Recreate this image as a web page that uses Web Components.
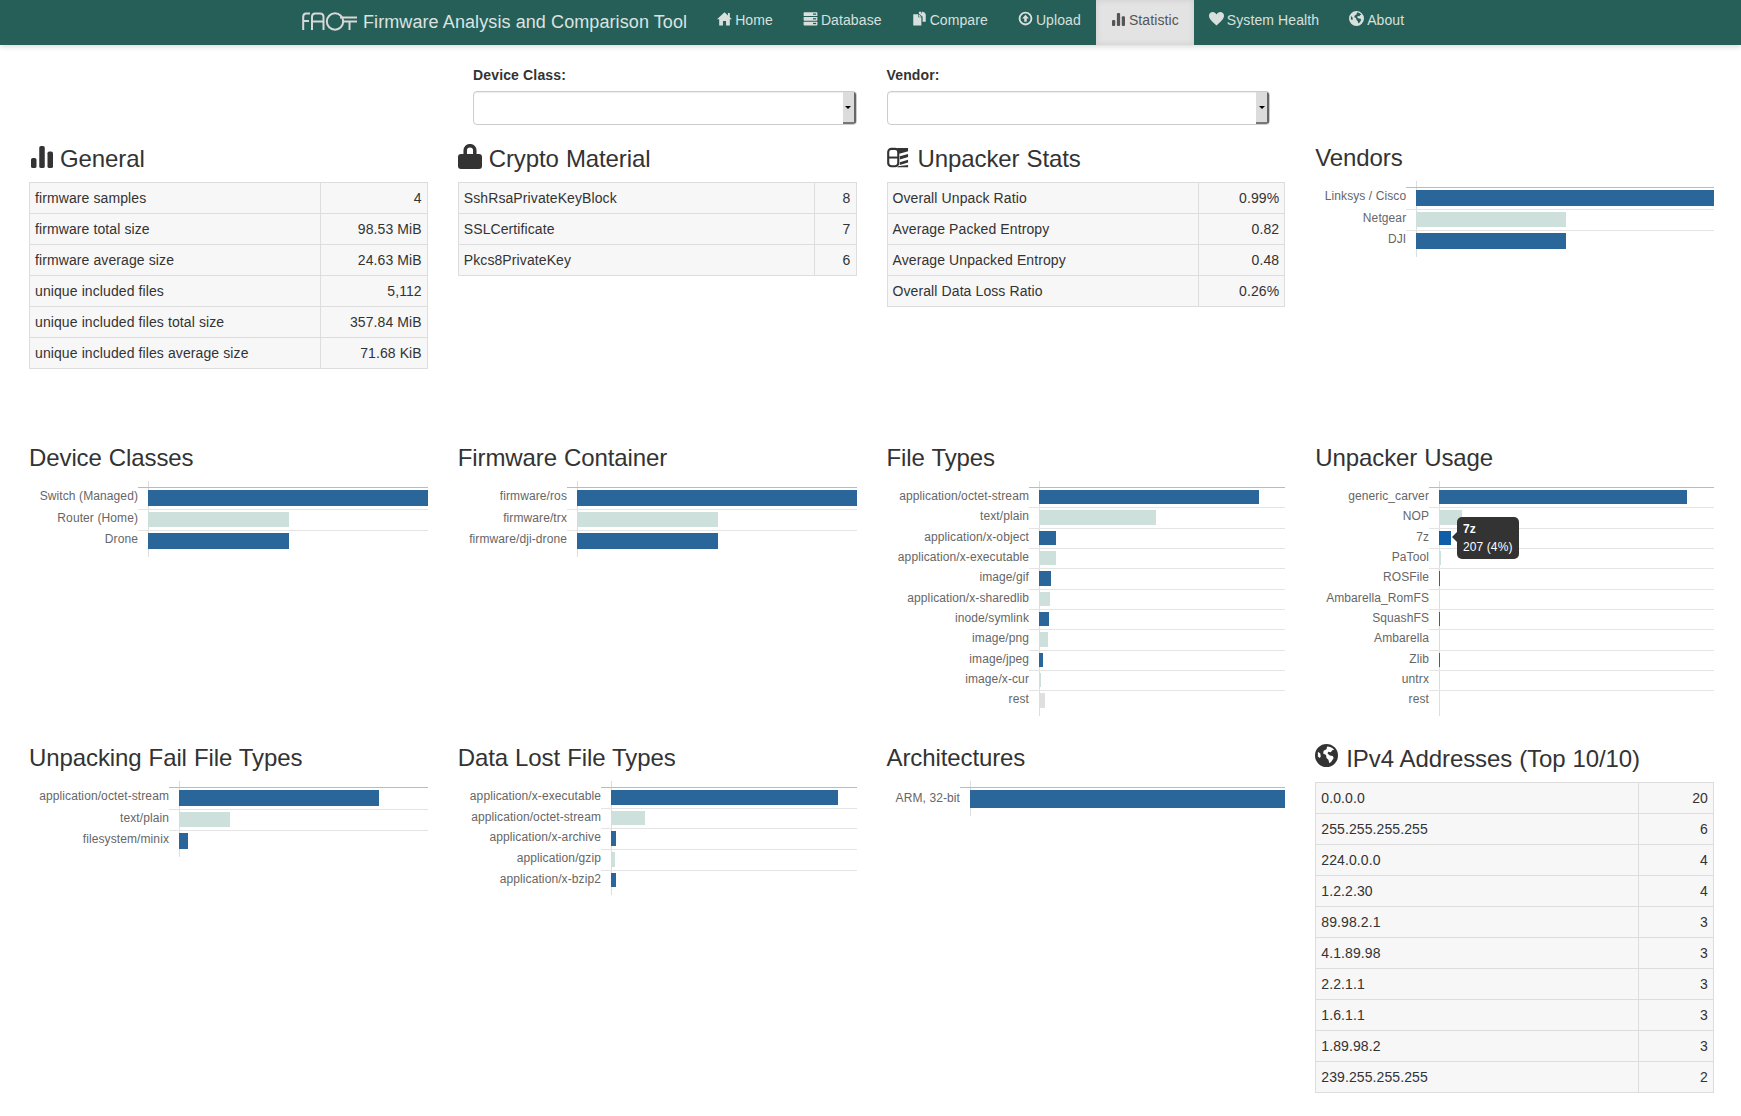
<!DOCTYPE html>
<html>
<head>
<meta charset="utf-8">
<title>FACT Statistic</title>
<style>
  html, body { margin: 0; background: #fff; font-family: "Liberation Sans", Arial, sans-serif; color: #333; font-size: 14px; }
</style>
</head>
<body>
<fact-navbar>
  <nav-link icon="home">Home</nav-link>
  <nav-link icon="database">Database</nav-link>
  <nav-link icon="compare">Compare</nav-link>
  <nav-link icon="upload">Upload</nav-link>
  <nav-link icon="stats" active>Statistic</nav-link>
  <nav-link icon="heart">System Health</nav-link>
  <nav-link icon="globe">About</nav-link>
</fact-navbar>

<filter-bar>
  <filter-select label="Device Class:"></filter-select>
  <filter-select label="Vendor:"></filter-select>
</filter-bar>

<stats-grid>
  <stats-panel heading="General" icon="stats">
    <stat-table style="--split:291px">
      <stat-row><span>firmware samples</span><span slot="value">4</span></stat-row>
      <stat-row><span>firmware total size</span><span slot="value">98.53 MiB</span></stat-row>
      <stat-row><span>firmware average size</span><span slot="value">24.63 MiB</span></stat-row>
      <stat-row><span>unique included files</span><span slot="value">5,112</span></stat-row>
      <stat-row><span>unique included files total size</span><span slot="value">357.84 MiB</span></stat-row>
      <stat-row><span>unique included files average size</span><span slot="value">71.68 KiB</span></stat-row>
    </stat-table>
  </stats-panel>
  <stats-panel heading="Crypto Material" icon="lock">
    <stat-table style="--split:356px">
      <stat-row><span>SshRsaPrivateKeyBlock</span><span slot="value">8</span></stat-row>
      <stat-row><span>SSLCertificate</span><span slot="value">7</span></stat-row>
      <stat-row><span>Pkcs8PrivateKey</span><span slot="value">6</span></stat-row>
    </stat-table>
  </stats-panel>
  <stats-panel heading="Unpacker Stats" icon="unpack">
    <stat-table style="--split:311px">
      <stat-row><span>Overall Unpack Ratio</span><span slot="value">0.99%</span></stat-row>
      <stat-row><span>Average Packed Entropy</span><span slot="value">0.82</span></stat-row>
      <stat-row><span>Average Unpacked Entropy</span><span slot="value">0.48</span></stat-row>
      <stat-row><span>Overall Data Loss Ratio</span><span slot="value">0.26%</span></stat-row>
    </stat-table>
  </stats-panel>
  <stats-panel heading="Vendors">
    <bar-chart style="--axis:101px;--row:21.5px;--label-h:19px">
      <bar-row value="100">Linksys / Cisco</bar-row>
      <bar-row value="50.2" tone="alt">Netgear</bar-row>
      <bar-row value="50.2">DJI</bar-row>
    </bar-chart>
  </stats-panel>

  <stats-panel heading="Device Classes">
    <bar-chart style="--axis:119px;--row:21.5px;--label-h:19px">
      <bar-row value="100">Switch (Managed)</bar-row>
      <bar-row value="50.4" tone="alt">Router (Home)</bar-row>
      <bar-row value="50.4">Drone</bar-row>
    </bar-chart>
  </stats-panel>
  <stats-panel heading="Firmware Container">
    <bar-chart style="--axis:119.25px;--row:21.5px;--label-h:19px">
      <bar-row value="100">firmware/ros</bar-row>
      <bar-row value="50.4" tone="alt">firmware/trx</bar-row>
      <bar-row value="50.4">firmware/dji-drone</bar-row>
    </bar-chart>
  </stats-panel>
  <stats-panel heading="File Types">
    <bar-chart style="--axis:152.5px;--row:20.33px">
      <bar-row value="89.5">application/octet-stream</bar-row>
      <bar-row value="47.5" tone="alt">text/plain</bar-row>
      <bar-row value="7.1">application/x-object</bar-row>
      <bar-row value="7" tone="alt">application/x-executable</bar-row>
      <bar-row value="4.9">image/gif</bar-row>
      <bar-row value="4.5" tone="alt">application/x-sharedlib</bar-row>
      <bar-row value="4.1">inode/symlink</bar-row>
      <bar-row value="3.7" tone="alt">image/png</bar-row>
      <bar-row value="1.6">image/jpeg</bar-row>
      <bar-row value="1" tone="alt">image/x-cur</bar-row>
      <bar-row value="2.4" tone="rest">rest</bar-row>
    </bar-chart>
  </stats-panel>
  <stats-panel heading="Unpacker Usage">
    <bar-chart style="--axis:123.75px;--row:20.33px">
      <bar-row value="90.2">generic_carver</bar-row>
      <bar-row value="8.4" tone="alt">NOP</bar-row>
      <bar-row value="4.4" tone="hover">7z</bar-row>
      <bar-row value="0.8" tone="alt">PaTool</bar-row>
      <bar-row value="0.4">ROSFile</bar-row>
      <bar-row value="0.2" tone="alt">Ambarella_RomFS</bar-row>
      <bar-row value="0.4">SquashFS</bar-row>
      <bar-row value="0.2" tone="alt">Ambarella</bar-row>
      <bar-row value="0.4">Zlib</bar-row>
      <bar-row value="0.2" tone="alt">untrx</bar-row>
      <bar-row value="0.3" tone="rest">rest</bar-row>
      <chart-tip slot="tip" style="left:141.75px;top:36px"><b>7z</b><span>207 (4%)</span></chart-tip>
    </bar-chart>
  </stats-panel>

  <stats-panel heading="Unpacking Fail File Types">
    <bar-chart style="--axis:150px;--row:21.5px;--label-h:19px">
      <bar-row value="80.3">application/octet-stream</bar-row>
      <bar-row value="20.5" tone="alt">text/plain</bar-row>
      <bar-row value="3.6">filesystem/minix</bar-row>
    </bar-chart>
  </stats-panel>
  <stats-panel heading="Data Lost File Types">
    <bar-chart style="--axis:153.25px;--row:20.7px">
      <bar-row value="92.3">application/x-executable</bar-row>
      <bar-row value="13.8" tone="alt">application/octet-stream</bar-row>
      <bar-row value="2">application/x-archive</bar-row>
      <bar-row value="1.6" tone="alt">application/gzip</bar-row>
      <bar-row value="2">application/x-bzip2</bar-row>
    </bar-chart>
  </stats-panel>
  <stats-panel heading="Architectures">
    <bar-chart style="--axis:83.5px;--row:24.3px">
      <bar-row value="100">ARM, 32-bit</bar-row>
    </bar-chart>
  </stats-panel>
  <stats-panel heading="IPv4 Addresses (Top 10/10)" icon="globe">
    <stat-table style="--split:323px">
      <stat-row><span>0.0.0.0</span><span slot="value">20</span></stat-row>
      <stat-row><span>255.255.255.255</span><span slot="value">6</span></stat-row>
      <stat-row><span>224.0.0.0</span><span slot="value">4</span></stat-row>
      <stat-row><span>1.2.2.30</span><span slot="value">4</span></stat-row>
      <stat-row><span>89.98.2.1</span><span slot="value">3</span></stat-row>
      <stat-row><span>4.1.89.98</span><span slot="value">3</span></stat-row>
      <stat-row><span>2.2.1.1</span><span slot="value">3</span></stat-row>
      <stat-row><span>1.6.1.1</span><span slot="value">3</span></stat-row>
      <stat-row><span>1.89.98.2</span><span slot="value">3</span></stat-row>
      <stat-row><span>239.255.255.255</span><span slot="value">2</span></stat-row>
    </stat-table>
  </stats-panel>
</stats-grid>

<script>
const ICONS = {
  home: '<path d="M12 2 0 13h3.5v10h6v-7h5v7h6V13H24L20.5 9.8V3h-3v4L12 2z"/>',
  database: '<rect x="1" y="2" width="22" height="6" rx="1"/><rect x="1" y="9.5" width="22" height="6" rx="1"/><rect x="1" y="17" width="22" height="6" rx="1"/><g fill="var(--icon-cut,#265f58)"><rect x="16" y="4" width="5" height="2"/><rect x="16" y="11.5" width="5" height="2"/><rect x="16" y="19" width="5" height="2"/></g>',
  compare: '<path d="M2 5h8v5h5v13H2z"/><path d="M11 5l4 4h-4z"/><path d="M11 1h4v3h1V1h1l5 4v12h-5V9l-6-5z"/><path d="M18 1l4 3h-4z"/>',
  upload: '<path fill-rule="evenodd" d="M12 1a11 11 0 1 0 0 22 11 11 0 0 0 0-22zm0 3a8 8 0 1 1 0 16 8 8 0 0 1 0-16z"/><path d="M12 6l5.5 6H14v5h-4v-5H6.500z"/>',
  stats: '<rect x="0" y="13" width="6" height="11" rx="2"/><rect x="9" y="0" width="6" height="24" rx="2"/><rect x="18" y="6" width="6" height="18" rx="2"/>',
  heart: '<path d="M12 23C5 17 0 12.500 0 7.500 0 3.500 3 1.500 6 1.500c2.500 0 4.800 1.400 6 4 1.200-2.600 3.500-4 6-4 3 0 6 2 6 6 0 5-5 9.500-12 15.500z"/>',
  globe: '<path fill-rule="evenodd" d="M12 0a12 12 0 1 0 0 24 12 12 0 0 0 0-24zM13 2.500c2 0 5 1 7 3.500l-2 .5-1.500 2-2.500-.5-1 2 2.500 2 3 .5 1 2-2.500 4-2 1.500-1-3.500-2-2-.5-3-3-1.500.5-3 3-1.500.5-2.500zM3 8l2.500 2 .5 3-1 1.500L3 13z"/>',
  lock: '<path d="M7.200 11V6.500a4.800 4.800 0 0 1 9.600 0V11" fill="none" stroke="currentColor" stroke-width="3.500"/><rect x="0" y="10" width="24" height="15" rx="3"/>',
  unpack: '<rect x="1.300" y="2" width="11" height="19" rx="3.500" fill="none" stroke="currentColor" stroke-width="2.300"/><path d="M2 11.500h10" stroke="currentColor" stroke-width="2.200" fill="none"/><path d="M11 1h12v3.500l-8.500 2.500H12z"/><path d="M14 10l9-2.500v3.500l-9 2.500z"/><path d="M14 16.500l9-2.500v3l-9 2.500z"/><path d="M12 21l11-1.500V22H11z"/>'
};

class UiIcon extends HTMLElement {
  constructor() {
    super();
    this.attachShadow({ mode: 'open' });
  }
  connectedCallback() {
    const vb = this.getAttribute('name') === 'lock' ? '0 0 24 25' : '0 0 24 24';
    this.shadowRoot.innerHTML = `
      <style>
        :host { display: inline-block; line-height: 0; }
        svg { width: 100%; height: 100%; fill: currentColor; display: block; }
      </style>
      <svg viewBox="${vb}">${ICONS[this.getAttribute('name')] || ''}</svg>`;
  }
}
customElements.define('ui-icon', UiIcon);

class FactNavbar extends HTMLElement {
  constructor() {
    super();
    this.attachShadow({ mode: 'open' }).innerHTML = `
      <style>
        :host {
          display: flex;
          height: 45px;
          padding-left: 302px;
          background: #265f58;
          box-shadow: 0 2px 5px rgba(0, 0, 0, 0.14);
          position: relative;
          z-index: 2;
        }
        .logo { width: 55px; height: 19px; margin: 12px 6px 0 0; flex: none; }
        .brand { font-size: 18px; letter-spacing: 0.09px; line-height: 44px; color: #dbe3e1; margin-right: 15px; white-space: nowrap; }
      </style>
      <svg class="logo" viewBox="0 0 55 19" fill="none" stroke="#d8d8d8" stroke-width="2">
        <path d="M8 1.500H4C2 1.500 1.200 3 1.200 5v13M1.200 9H7"/>
        <path d="M10 18V5c0-2 1-3.500 3-3.500h5c2 0 3.500 1.500 3.500 3.500v13M10 9.500h11.500"/>
        <circle cx="33" cy="9.500" r="8.200" stroke-width="2"/>
        <path d="M38 5.500h17M40 9.500h15M47.500 9.500V18"/>
      </svg>
      <div class="brand">Firmware Analysis and Comparison Tool</div>
      <slot></slot>`;
  }
}
customElements.define('fact-navbar', FactNavbar);

class NavLink extends HTMLElement {
  constructor() {
    super();
    this.attachShadow({ mode: 'open' });
  }
  connectedCallback() {
    this.shadowRoot.innerHTML = `
      <style>
        :host {
          display: flex;
          align-items: flex-start;
          height: 45px;
          box-sizing: border-box;
          padding: 10px 15px 0;
          font-size: 14px;
          letter-spacing: 0.1px;
          line-height: 20px;
          color: #d8e0de;
          white-space: nowrap;
          --icon-cut: #265f58;
        }
        :host([active]) {
          background: #e3e3e3;
          color: #555;
          box-shadow: inset 0 0 6px rgba(0, 0, 0, 0.1);
        }
        ui-icon { width: 15px; height: 15px; margin: 1px 3px 0 0; }
        :host([icon="stats"]) ui-icon { width: 13px; height: 13px; margin: 3px 4px 0 1px; }
      </style>
      <ui-icon name="${this.getAttribute('icon')}"></ui-icon><slot></slot>`;
  }
}
customElements.define('nav-link', NavLink);

class FilterBar extends HTMLElement {
  constructor() {
    super();
    this.attachShadow({ mode: 'open' }).innerHTML = `
      <style>
        :host { display: flex; gap: 30px; height: 100px; box-sizing: border-box; padding: 20px 0 0 473px; }
      </style>
      <slot></slot>`;
  }
}
customElements.define('filter-bar', FilterBar);

class FilterSelect extends HTMLElement {
  constructor() {
    super();
    this.attachShadow({ mode: 'open' });
  }
  connectedCallback() {
    this.shadowRoot.innerHTML = `
      <style>
        :host { display: block; width: 383.5px; }
        label { display: block; font-weight: 700; font-size: 14px; letter-spacing: 0.15px; line-height: 20px; margin-bottom: 6px; color: #333; }
        .box {
          height: 34px;
          box-sizing: border-box;
          border: 1px solid #ccc;
          border-radius: 4px;
          box-shadow: inset 0 1px 1px rgba(0, 0, 0, 0.075);
          display: flex;
          justify-content: flex-end;
          overflow: hidden;
          background: #fff;
        }
        .arrow {
          width: 13px;
          box-sizing: border-box;
          background: #dcdcdc;
          border-right: 2px solid #666;
          border-bottom: 2px solid #777;
          display: flex;
          align-items: center;
          justify-content: center;
        }
        .arrow::after {
          content: "";
          border: 3px solid transparent;
          border-top: 3px solid #000;
          border-bottom: 0;
        }
      </style>
      <label>${this.getAttribute('label')}</label>
      <div class="box"><div class="arrow"></div></div>`;
  }
}
customElements.define('filter-select', FilterSelect);

class StatsGrid extends HTMLElement {
  constructor() {
    super();
    this.attachShadow({ mode: 'open' }).innerHTML = `
      <style>
        :host {
          display: grid;
          grid-template-columns: repeat(4, 398.75px);
          grid-template-rows: 300px 300px auto;
          column-gap: 30px;
          padding-left: 29px;
        }
      </style>
      <slot></slot>`;
  }
}
customElements.define('stats-grid', StatsGrid);

class StatsPanel extends HTMLElement {
  constructor() {
    super();
    this.attachShadow({ mode: 'open' });
  }
  connectedCallback() {
    const icon = this.getAttribute('icon');
    this.shadowRoot.innerHTML = `
      <style>
        :host { display: block; }
        h3 {
          display: flex;
          align-items: center;
          margin: 0 0 10px;
          font-size: 24px;
          font-weight: 500;
          letter-spacing: -0.1px;
          word-spacing: 0.5px;
          line-height: 26px;
          color: #333;
          white-space: pre;
        }
        h3.with-icon { padding-top: 1px; }
        ui-icon { width: 23px; height: 23px; margin: -3px 7px 0 0; flex: none; }
        ui-icon[name="lock"] { width: 24px; height: 25px; margin: -6px 7px 0 0; }
        ui-icon[name="unpack"] { width: 22px; height: 22px; margin: -3px 9px 0 0; }
        ui-icon[name="stats"] { width: 22px; height: 22px; margin: -4px 7px 0 2px; }
        ui-icon[name="globe"] { width: 23px; height: 23px; margin: -7px 8px 0 0; }
      </style>
      <h3 class="${icon ? 'with-icon' : ''}">${icon ? `<ui-icon name="${icon}"></ui-icon>` : ''}<span>${this.getAttribute('heading')}</span></h3>
      <slot></slot>`;
  }
}
customElements.define('stats-panel', StatsPanel);

class StatTable extends HTMLElement {
  constructor() {
    super();
    this.attachShadow({ mode: 'open' }).innerHTML = `
      <style>
        :host {
          display: block;
          border: 1px solid #ddd;
          border-bottom: 0;
          background: #f7f7f7;
        }
      </style>
      <slot></slot>`;
  }
}
customElements.define('stat-table', StatTable);

class StatRow extends HTMLElement {
  constructor() {
    super();
    this.attachShadow({ mode: 'open' }).innerHTML = `
      <style>
        :host {
          display: grid;
          grid-template-columns: var(--split) 1fr;
          height: 31px;
          box-sizing: border-box;
          border-bottom: 1px solid #ddd;
          font-size: 14px;
          letter-spacing: 0.1px;
          line-height: 30px;
          color: #333;
        }
        .name { padding-left: 5px; border-right: 1px solid #ddd; }
        .value { padding-right: 5px; text-align: right; }
      </style>
      <div class="name"><slot></slot></div>
      <div class="value"><slot name="value"></slot></div>`;
  }
}
customElements.define('stat-row', StatRow);

class BarChart extends HTMLElement {
  constructor() {
    super();
    this.attachShadow({ mode: 'open' }).innerHTML = `
      <style>
        :host { display: block; position: relative; padding: 6px 0 5px; }
        .axis { position: absolute; left: var(--axis); top: 0; bottom: 0; width: 1px; background: #ddd; }
        ::slotted(bar-row:first-child) { --line: #bbb; }
      </style>
      <div class="axis"></div>
      <slot></slot>
      <slot name="tip"></slot>`;
  }
}
customElements.define('bar-chart', BarChart);

const BAR_TONES = { main: '#2a6699', alt: '#cde0db', rest: '#dfdfdf', hover: '#0f5ea8' };

class BarRow extends HTMLElement {
  constructor() {
    super();
    this.attachShadow({ mode: 'open' });
  }
  connectedCallback() {
    const tone = BAR_TONES[this.getAttribute('tone') || 'main'];
    this.shadowRoot.innerHTML = `
      <style>
        :host {
          display: grid;
          grid-template-columns: var(--axis) 1fr;
          height: var(--row);
          position: relative;
        }
        .label {
          display: flex;
          justify-content: flex-end;
          font-size: 12px;
          letter-spacing: 0.1px;
          line-height: var(--label-h, calc(var(--row) - 1.5px));
          color: #666;
          white-space: nowrap;
        }
        .tick { width: 10px; flex: none; border-top: 1px solid var(--line, #e4e4e4); }
        .plot { box-sizing: border-box; border-top: 1px solid var(--line, #e4e4e4); padding-top: 2px; }
        .bar { height: calc(var(--row) - 6px); background: ${tone}; width: ${this.getAttribute('value')}%; }
      </style>
      <div class="label"><slot></slot><div class="tick"></div></div>
      <div class="plot"><div class="bar"></div></div>`;
  }
}
customElements.define('bar-row', BarRow);

class ChartTip extends HTMLElement {
  constructor() {
    super();
    this.attachShadow({ mode: 'open' }).innerHTML = `
      <style>
        :host {
          position: absolute;
          box-sizing: border-box;
          display: flex;
          flex-direction: column;
          gap: 6px;
          padding: 6px;
          height: 42px;
          background: #333;
          border-radius: 5px;
          color: #fff;
          font-size: 12px;
          letter-spacing: 0.1px;
          line-height: 12px;
          white-space: nowrap;
        }
        :host::before {
          content: "";
          position: absolute;
          left: -5px;
          top: 15px;
          border: 5px solid transparent;
          border-right-color: #333;
          border-left: 0;
        }
      </style>
      <slot></slot>`;
  }
}
customElements.define('chart-tip', ChartTip);
</script>
</body>
</html>
